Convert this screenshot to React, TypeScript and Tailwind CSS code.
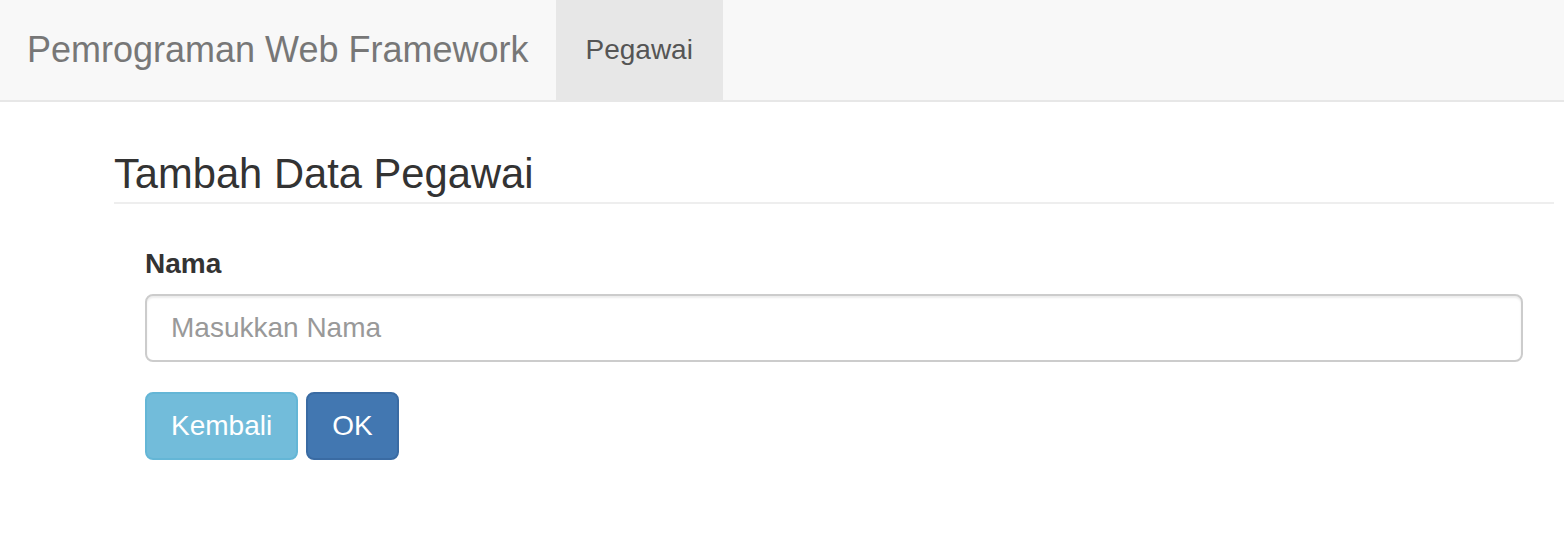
import React from "react";

export default function App() {
  return (
    <div className="min-h-[540px] bg-white font-['Liberation_Sans',Arial,sans-serif] text-[#333]">
      <nav className="flex h-[102px] border-b-2 border-[#e7e7e7] bg-[#f8f8f8]">
        <a className="block pl-[27px] pr-[27px] text-[36px] leading-[100px] text-[#777]">Pemrograman Web Framework</a>
        <a className="block bg-[#e7e7e7] px-[30px] text-[28px] leading-[100px] text-[#555]">Pegawai</a>
      </nav>
      <div className="ml-[114px] mr-[10px]">
        <h3 className="mt-[49px] border-b-2 border-[#eee] pb-[6px] text-[41.7px] leading-[45px] font-normal text-[#333]">
          Tambah Data Pegawai
        </h3>
        <form className="px-[31px] pt-[40px]">
          <div className="mb-[30px]">
            <label className="mb-[10px] block text-[28px] font-bold leading-[40px] text-[#333]">Nama</label>
            <input
              type="text"
              placeholder="Masukkan Nama"
              className="block h-[68px] w-full rounded-[8px] border-2 border-[#ccc] bg-white px-[24px] text-[28px] text-[#555] shadow-[inset_0_2px_2px_rgba(0,0,0,0.075)] outline-none placeholder:text-[#999]"
            />
          </div>
          <div className="flex gap-[8px]">
            <button
              type="button"
              className="h-[68px] rounded-[8px] border-2 border-[#64b6d6] bg-[#72bcda] px-[24px] text-[28px] text-white"
            >
              Kembali
            </button>
            <button
              type="submit"
              className="h-[68px] rounded-[8px] border-2 border-[#3a6ba3] bg-[#4277b1] px-[24px] text-[28px] text-white"
            >
              OK
            </button>
          </div>
        </form>
      </div>
    </div>
  );
}
